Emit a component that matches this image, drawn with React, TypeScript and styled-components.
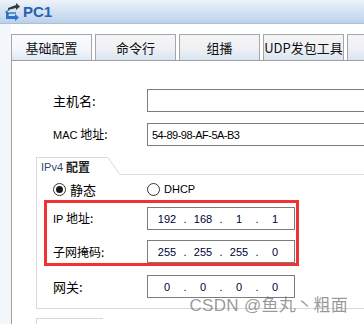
import styled, { createGlobalStyle } from "styled-components";

const GlobalStyle = createGlobalStyle`
  html, body {
    margin: 0;
    padding: 0;
    background: #fff;
  }
  body {
    font-family: "Noto Sans CJK SC", "Liberation Sans", sans-serif;
  }
`;

const Window = styled.div`
  width: 364px;
  height: 324px;
  overflow: hidden;
  position: relative;
  background: #fff;
  display: flex;
  flex-direction: column;
`;

const TitleBar = styled.div`
  height: 23px;
  flex: none;
  display: flex;
  align-items: center;
  gap: 2px;
  padding-left: 4px;
  background: linear-gradient(#edf3fa, #bcd2ea);
  border-bottom: 1px solid #a9c0d8;
`;

const TitleText = styled.span`
  font-family: "Liberation Sans", Arial, sans-serif;
  font-weight: bold;
  font-size: 15px;
  color: #2462b4;
`;

const Body = styled.div`
  flex: 1;
  display: flex;
  min-height: 0;
`;

const SideStrip = styled.div`
  width: 11px;
  flex: none;
  background: #f4f7fb;
`;

const Main = styled.div`
  flex: 1;
  display: flex;
  flex-direction: column;
  padding-top: 10px;
  min-width: 0;
`;

const TabRow = styled.div`
  display: flex;
  gap: 3px;
  height: 26px;
  flex: none;
`;

const Tab = styled.div<{ $active?: boolean }>`
  width: 81px;
  flex: none;
  box-sizing: border-box;
  border: 1px solid #a6a6a6;
  border-bottom: none;
  display: flex;
  align-items: center;
  justify-content: center;
  font-size: 13px;
  color: #111;
  white-space: nowrap;
  background: ${(p) =>
    p.$active
      ? "linear-gradient(#fbfcfe, #f2f6fb 60%, #dde8f4)"
      : "linear-gradient(#f4f4f4, #eef1f5 55%, #d9e4f1)"};
`;

const Panel = styled.div`
  flex: 1;
  width: 420px;
  border-top: 1px solid #a0a0a0;
  border-left: 1px solid #a0a0a0;
  background: #fff;
  padding-left: 24px;
  padding-top: 28px;
`;

const Row = styled.div<{ $indent?: number; $gap?: number }>`
  display: flex;
  align-items: center;
  padding-left: ${(p) => p.$indent ?? 0}px;
  margin-top: ${(p) => p.$gap ?? 0}px;
`;

const Label = styled.div<{ $size?: number }>`
  width: 94px;
  flex: none;
  font-size: ${(p) => p.$size ?? 12}px;
  color: #000;
  white-space: nowrap;
  line-height: 1;
`;

const LabelLatin = styled.span`
  font-family: "Liberation Sans", Arial, sans-serif;
  font-size: 11px;
`;

const TextInput = styled.div<{ $width: number }>`
  width: ${(p) => p.$width}px;
  height: 23px;
  box-sizing: border-box;
  border: 1px solid #7c7c7c;
  display: flex;
  align-items: center;
  padding-left: 4px;
  font-family: "Liberation Sans", Arial, sans-serif;
  font-size: 11px;
  letter-spacing: -0.5px;
  color: #000;
`;

const IpInput = styled.div`
  width: 148px;
  height: 23px;
  box-sizing: border-box;
  border: 1px solid #7c7c7c;
  display: flex;
  align-items: center;
  padding-left: 4px;
  font-family: "Liberation Sans", Arial, sans-serif;
  font-size: 11px;
  color: #000033;
`;

const IpCell = styled.span`
  width: 30px;
  text-align: center;
`;

const IpDot = styled.span`
  width: 6px;
  text-align: center;
`;

const Group = styled.div`
  margin-top: 11px;
  width: 380px;
`;

const GroupHead = styled.div`
  display: flex;
  height: 18px;
`;

const Legend = styled.div`
  width: 72px;
  box-sizing: border-box;
  border-top: 1px solid #d9d9d9;
  border-left: 1px solid #d9d9d9;
  padding-left: 4px;
  display: flex;
  align-items: center;
  gap: 3px;
  font-size: 12px;
  color: #222;
  white-space: nowrap;
`;

const LegendLatin = styled.span`
  font-family: "Liberation Sans", Arial, sans-serif;
  font-size: 11px;
  color: #354a6e;
`;

const LegendCjk = styled.span`
  font-weight: bold;
`;

const HeadLine = styled.div`
  flex: 1;
  border-bottom: 1px solid #e0e0e0;
`;

const GroupBody = styled.div`
  border-left: 1px solid #d9d9d9;
  border-bottom: 1px solid #d9d9d9;
  padding: 7px 0 10px 0;
`;

const RadioRow = styled.div`
  display: flex;
  align-items: center;
  padding-left: 16px;
  height: 14px;
`;

const RadioItem = styled.div<{ $width?: number }>`
  display: flex;
  align-items: center;
  gap: 4px;
  width: ${(p) => p.$width ?? 94}px;
  font-size: 13px;
  color: #000;
`;

const RadioCircle = styled.span<{ $checked?: boolean }>`
  width: 13px;
  height: 13px;
  box-sizing: border-box;
  border-radius: 50%;
  border: 1px solid #333;
  display: flex;
  align-items: center;
  justify-content: center;
  background: #fff;
  &::after {
    content: "";
    width: 7px;
    height: 7px;
    border-radius: 50%;
    background: ${(p) => (p.$checked ? "#1a1a1a" : "transparent")};
  }
`;

const RadioLatin = styled.span`
  font-family: "Liberation Sans", Arial, sans-serif;
  font-size: 11px;
`;

const RedBox = styled.div`
  margin: 4px 0 0 7px;
  width: 255px;
  box-sizing: border-box;
  border: 3px solid #f03232;
  padding: 4px 0 0 6px;
`;

const NextHead = styled.div`
  margin-top: 9px;
  width: 66px;
  height: 8px;
  border-top: 1px solid #d9d9d9;
  border-left: 1px solid #d9d9d9;
`;

const Watermark = styled.div`
  position: absolute;
  right: 16px;
  top: 294px;
  font-size: 17px;
  line-height: 20px;
  color: rgba(120, 120, 120, 0.75);
  white-space: nowrap;
  letter-spacing: 0.3px;
`;

const WatermarkLatin = styled.span`
  font-family: "Liberation Sans", Arial, sans-serif;
`;

const PcIcon = () => (
  <svg width="17" height="19" viewBox="0 0 17 19">
    <path d="M4 6 L12 3 L12 1 L16 4.5 L12 8 L12 6 L4 8 Z" fill="#3a3a3a" />
    <path d="M5 7 L1 10 L5 13 L5 11 L3.5 11 L3.5 9 L5 9 Z" fill="#2d6cc0" />
    <path
      d="M2 10 L2 17 L11 17 L11 19 L15 15.5 L11 12 L11 14 L4.5 14 L4.5 10 Z"
      fill="#2f73c8"
    />
    <rect x="5" y="10" width="7" height="2" fill="#5b93d6" />
  </svg>
);

const IpField = ({ parts }: { parts: string[] }) => (
  <IpInput>
    {parts.map((p, i) => (
      <span key={i} style={{ display: "contents" }}>
        {i > 0 && <IpDot>.</IpDot>}
        <IpCell>{p}</IpCell>
      </span>
    ))}
  </IpInput>
);

const tabs = ["基础配置", "命令行", "组播", "UDP发包工具", ""];

export default function App() {
  return (
    <Window>
      <GlobalStyle />
      <TitleBar>
        <PcIcon />
        <TitleText>PC1</TitleText>
      </TitleBar>
      <Body>
        <SideStrip />
        <Main>
          <TabRow>
            {tabs.map((t, i) => (
              <Tab key={i} $active={i === 0}>
                {t}
              </Tab>
            ))}
          </TabRow>
          <Panel>
            <Row $indent={17}>
              <Label $size={13}>主机名:</Label>
              <TextInput $width={260} />
            </Row>
            <Row $indent={17} $gap={11}>
              <Label>
                <LabelLatin>MAC</LabelLatin> 地址:
              </Label>
              <TextInput $width={260}>54-89-98-AF-5A-B3</TextInput>
            </Row>
            <Group>
              <GroupHead>
                <Legend>
                  <LegendLatin>IPv4</LegendLatin>
                  <LegendCjk>配置</LegendCjk>
                </Legend>
                <svg width="12" height="18" viewBox="0 0 12 18">
                  <line x1="0" y1="0.5" x2="12" y2="17.5" stroke="#d9d9d9" />
                </svg>
                <HeadLine />
              </GroupHead>
              <GroupBody>
                <RadioRow>
                  <RadioItem>
                    <RadioCircle $checked />
                    静态
                  </RadioItem>
                  <RadioItem>
                    <RadioCircle />
                    <RadioLatin>DHCP</RadioLatin>
                  </RadioItem>
                </RadioRow>
                <RedBox>
                  <Row>
                    <Label>
                      <LabelLatin>IP</LabelLatin> 地址:
                    </Label>
                    <IpField parts={["192", "168", "1", "1"]} />
                  </Row>
                  <Row $gap={10}>
                    <Label>子网掩码:</Label>
                    <IpField parts={["255", "255", "255", "0"]} />
                  </Row>
                </RedBox>
                <Row $indent={16} $gap={9}>
                  <Label $size={13}>网关:</Label>
                  <IpField parts={["0", "0", "0", "0"]} />
                </Row>
              </GroupBody>
            </Group>
            <NextHead />
          </Panel>
        </Main>
      </Body>
      <Watermark>
        <WatermarkLatin>CSDN @</WatermarkLatin>鱼丸丶粗面
      </Watermark>
    </Window>
  );
}
